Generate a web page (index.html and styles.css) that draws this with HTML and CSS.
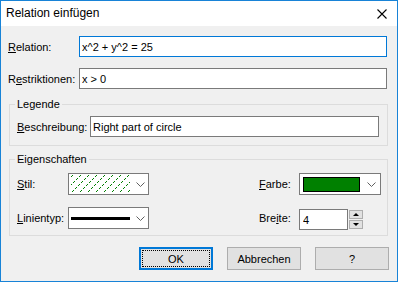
FILE: index.html
```html
<!DOCTYPE html>
<html lang="de">
<head>
  <meta charset="UTF-8" />
  <title>Relation einfügen</title>
  <link rel="stylesheet" href="styles.css">
</head>
<body>

  <div class="dialog">
    <div class="titlebar">
      <span class="title">Relation einfügen</span>
      <svg class="close" width="10" height="10" viewBox="0 0 10 10">
        <path d="M0.5 0.5 L9.5 9.5 M9.5 0.5 L0.5 9.5" stroke="#000" stroke-width="1.1" fill="none"/>
      </svg>
    </div>

    <div class="content">
      <div class="row">
        <label class="lbl"><u>R</u>elation:</label>
        <input class="textbox focused" type="text" value="x^2 + y^2 = 25">
      </div>
      <div class="row row-second">
        <label class="lbl">R<u>e</u>striktionen:</label>
        <input class="textbox" type="text" value="x &gt; 0">
      </div>

      <fieldset class="group group-legend">
        <legend>Legende</legend>
        <div class="legend-row">
          <label class="lbl-desc"><u>B</u>eschreibung:</label>
          <input class="textbox" type="text" value="Right part of circle">
        </div>
      </fieldset>

      <fieldset class="group group-props">
        <legend>Eigenschaften</legend>
        <div class="props-grid">
          <label class="lbl-prop"><u>S</u>til:</label>
          <div class="combo">
            <svg class="hatch" width="59" height="18" viewBox="0 0 59 18" shape-rendering="crispEdges">
              <defs>
                <path id="dotLine" fill="#008000" d="M17 0h1v1h-1z M16 1h1v1h-1z M14 3h1v1h-1z M13 4h1v1h-1z M11 6h1v1h-1z M10 7h1v1h-1z M8 9h1v1h-1z M7 10h1v1h-1z M5 12h1v1h-1z M4 13h1v1h-1z M2 15h1v1h-1z M1 16h1v1h-1z"/>
              </defs>
              <use href="#dotLine" x="-16"/>
              <use href="#dotLine" x="-8"/>
              <use href="#dotLine" x="0"/>
              <use href="#dotLine" x="8"/>
              <use href="#dotLine" x="16"/>
              <use href="#dotLine" x="24"/>
              <use href="#dotLine" x="32"/>
              <use href="#dotLine" x="40"/>
              <use href="#dotLine" x="48"/>
              <use href="#dotLine" x="56"/>
            </svg>
            <svg class="chevron" width="9" height="5" viewBox="0 0 9 5">
              <polyline points="0.5,0.5 4.5,4.5 8.5,0.5" fill="none" stroke="#606060" stroke-width="1"/>
            </svg>
          </div>
          <span></span>
          <label class="lbl-prop"><u>F</u>arbe:</label>
          <div class="combo combo-color">
            <span class="swatch"></span>
            <svg class="chevron" width="9" height="5" viewBox="0 0 9 5">
              <polyline points="0.5,0.5 4.5,4.5 8.5,0.5" fill="none" stroke="#606060" stroke-width="1"/>
            </svg>
          </div>

          <label class="lbl-prop"><u>L</u>inientyp:</label>
          <div class="combo">
            <span class="line-sample"></span>
            <svg class="chevron" width="9" height="5" viewBox="0 0 9 5">
              <polyline points="0.5,0.5 4.5,4.5 8.5,0.5" fill="none" stroke="#606060" stroke-width="1"/>
            </svg>
          </div>
          <span></span>
          <label class="lbl-prop">Bre<u>i</u>te:</label>
          <div class="spin">
            <input class="textbox spin-input" type="text" value="4">
            <div class="spin-buttons">
              <span class="spin-btn"><span class="arrow-up"></span></span>
              <span class="spin-btn"><span class="arrow-down"></span></span>
            </div>
          </div>
        </div>
      </fieldset>

      <div class="buttons">
        <button class="btn btn-default"><span class="focus-rect">OK</span></button>
        <button class="btn">Abbrechen</button>
        <button class="btn">?</button>
      </div>
    </div>
  </div>

</body>
</html>
```

FILE: styles.css
```css
* {
  box-sizing: border-box;
}

body {
  margin: 0;
  width: 398px;
  height: 282px;
  font-family: "Liberation Sans", Arial, sans-serif;
  font-size: 11px;
  color: #000;
  background-color: #f0f0f0;
}

.dialog {
  width: 398px;
  height: 282px;
  border: 1px solid #1883d7;
  display: flex;
  flex-direction: column;
  background-color: #f0f0f0;
}

/* Title bar */
.titlebar {
  height: 25px;
  background-color: #fff;
  display: flex;
  align-items: center;
  justify-content: space-between;
  padding: 0 10px 0 5px;
}

.title {
  font-size: 12px;
  line-height: 14px;
  margin-top: -1px;
}

.close {
  display: block;
}

/* Body */
.content {
  flex: 1;
  padding: 10px 9px 0 8px;
}

.row {
  display: flex;
  align-items: center;
  margin: 0 1px 0 -1px;
}

.row-second {
  margin-top: 11px;
}

.lbl {
  width: 71px;
  flex-shrink: 0;
}

u {
  text-decoration-thickness: 1px;
  text-underline-offset: 1px;
}

.textbox {
  flex: 1;
  height: 21px;
  border: 1px solid #7a7a7a;
  background-color: #fff;
  padding: 0 2px;
  font-family: "Liberation Sans", Arial, sans-serif;
  font-size: 11px;
  color: #000;
  outline: none;
  margin: 0;
  border-radius: 0;
}

.textbox.focused {
  border-color: #0078d7;
}

/* Group boxes */
.group {
  border: 1px solid #dcdcdc;
  margin: 0;
  min-width: 0;
}

.group legend {
  padding: 0 2px;
  margin-left: -2px;
  line-height: 13px;
}

.group-legend {
  margin-top: 9px;
  padding: 5px 8px 8px 7px;
}

.group-props {
  margin-top: 7px;
  padding: 7px 6px 5px 7px;
}

.legend-row {
  display: flex;
  align-items: center;
}

.lbl-desc {
  width: 73px;
  flex-shrink: 0;
}

.props-grid {
  display: grid;
  grid-template-columns: 51px 81px 110px 40px 82px;
  row-gap: 12px;
  align-items: start;
}

.lbl-prop {
  line-height: 22px;
}

.combo {
  height: 22px;
  border: 1px solid #7a7a7a;
  background-color: #fff;
  display: flex;
  align-items: center;
  padding: 0 3px 0 2px;
}

.combo .chevron {
  margin-left: auto;
  display: block;
}

.hatch {
  display: block;
}

.line-sample {
  width: 59px;
  height: 3px;
  background-color: #000;
}

.combo-color {
  padding: 0 4px 0 3px;
}

.swatch {
  width: 57px;
  height: 15px;
  border: 1px solid #000;
  background-color: #008000;
}

/* Spin box */
.spin {
  display: flex;
  gap: 1px;
  margin-top: 2px;
}

.spin-input {
  flex: none;
  width: 49px;
  padding: 0 3px;
}

.spin-buttons {
  display: flex;
  flex-direction: column;
  gap: 1px;
  padding-top: 1px;
}

.spin-btn {
  width: 14px;
  height: 9px;
  border: 1px solid #adadad;
  background-color: #e1e1e1;
  display: flex;
  align-items: center;
  justify-content: center;
}

.arrow-up {
  width: 0;
  height: 0;
  border-left: 3px solid transparent;
  border-right: 3px solid transparent;
  border-bottom: 3px solid #000;
}

.arrow-down {
  width: 0;
  height: 0;
  border-left: 3px solid transparent;
  border-right: 3px solid transparent;
  border-top: 3px solid #000;
}

/* Dialog buttons */
.buttons {
  display: flex;
  justify-content: flex-end;
  gap: 14px;
  margin: 11px -1px 0 0;
}

.btn {
  width: 74px;
  height: 23px;
  border: 1px solid #adadad;
  background-color: #e1e1e1;
  font-family: "Liberation Sans", Arial, sans-serif;
  font-size: 11px;
  color: #000;
  padding: 0;
  border-radius: 0;
}

.btn-default {
  border: 2px solid #0078d7;
  padding: 1px;
}

.focus-rect {
  display: flex;
  align-items: center;
  justify-content: center;
  height: 100%;
  border: 1px dotted #000;
}
```
